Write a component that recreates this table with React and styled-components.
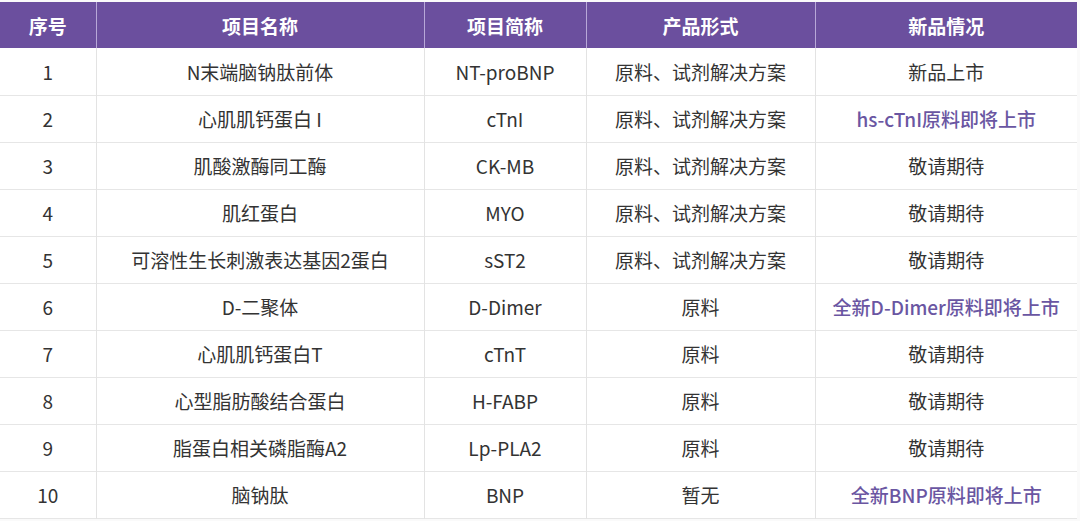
import React from "react";
import styled, { createGlobalStyle } from "styled-components";

const rows = [
  ["1", "N末端脑钠肽前体", "NT-proBNP", "原料、试剂解决方案", "新品上市", false],
  ["2", "心肌肌钙蛋白 I", "cTnI", "原料、试剂解决方案", "hs-cTnI原料即将上市", true],
  ["3", "肌酸激酶同工酶", "CK-MB", "原料、试剂解决方案", "敬请期待", false],
  ["4", "肌红蛋白", "MYO", "原料、试剂解决方案", "敬请期待", false],
  ["5", "可溶性生长刺激表达基因2蛋白", "sST2", "原料、试剂解决方案", "敬请期待", false],
  ["6", "D-二聚体", "D-Dimer", "原料", "全新D-Dimer原料即将上市", true],
  ["7", "心肌肌钙蛋白T", "cTnT", "原料", "敬请期待", false],
  ["8", "心型脂肪酸结合蛋白", "H-FABP", "原料", "敬请期待", false],
  ["9", "脂蛋白相关磷脂酶A2", "Lp-PLA2", "原料", "敬请期待", false],
  ["10", "脑钠肽", "BNP", "暂无", "全新BNP原料即将上市", true],
];

const headers = ["序号", "项目名称", "项目简称", "产品形式", "新品情况"];
const widths = [96, 328, 162, 229, 262];

const GlobalStyle = createGlobalStyle`
  body {
    margin: 0;
    background: #fff;
    font-family: "Noto Sans CJK SC", "Noto Sans", sans-serif;
  }
`;

const Page = styled.div`
  width: 1080px;
  height: 521px;
  padding-top: 2px;
  box-sizing: border-box;
  background: #fafafa;
`;

const Table = styled.table`
  width: 1077px;
  border-collapse: collapse;
  table-layout: fixed;
  background: #fff;
`;

const HeadCell = styled.th`
  height: 46px;
  padding: 0;
  background: #6b4f9e;
  color: #fff;
  font-size: 19px;
  font-weight: 700;
  text-align: center;
  border-left: 1px solid #b8a8d8;
  &:first-child {
    border-left: none;
  }
`;

const Row = styled.tr`
  height: 47px;
  border-bottom: 1px solid #e6e6e6;
`;

const Cell = styled.td`
  padding: 0;
  text-align: center;
  font-size: 19px;
  color: ${(p) => (p.$highlight ? "#6a56a2" : "#333")};
  font-weight: ${(p) => (p.$highlight ? 500 : 400)};
  border-left: 1px solid #e3e3e3;
  white-space: nowrap;
  &:first-child {
    border-left: none;
  }
`;

export default function App() {
  return (
    <Page>
      <GlobalStyle />
      <Table>
        <colgroup>
          {widths.map((w, i) => (
            <col key={i} style={{ width: w }} />
          ))}
        </colgroup>
        <thead>
          <tr>
            {headers.map((h) => (
              <HeadCell key={h}>{h}</HeadCell>
            ))}
          </tr>
        </thead>
        <tbody>
          {rows.map(([no, name, abbr, form, status, hl]) => (
            <Row key={no}>
              <Cell>{no}</Cell>
              <Cell>{name}</Cell>
              <Cell>{abbr}</Cell>
              <Cell>{form}</Cell>
              <Cell $highlight={hl}>{status}</Cell>
            </Row>
          ))}
        </tbody>
      </Table>
    </Page>
  );
}
